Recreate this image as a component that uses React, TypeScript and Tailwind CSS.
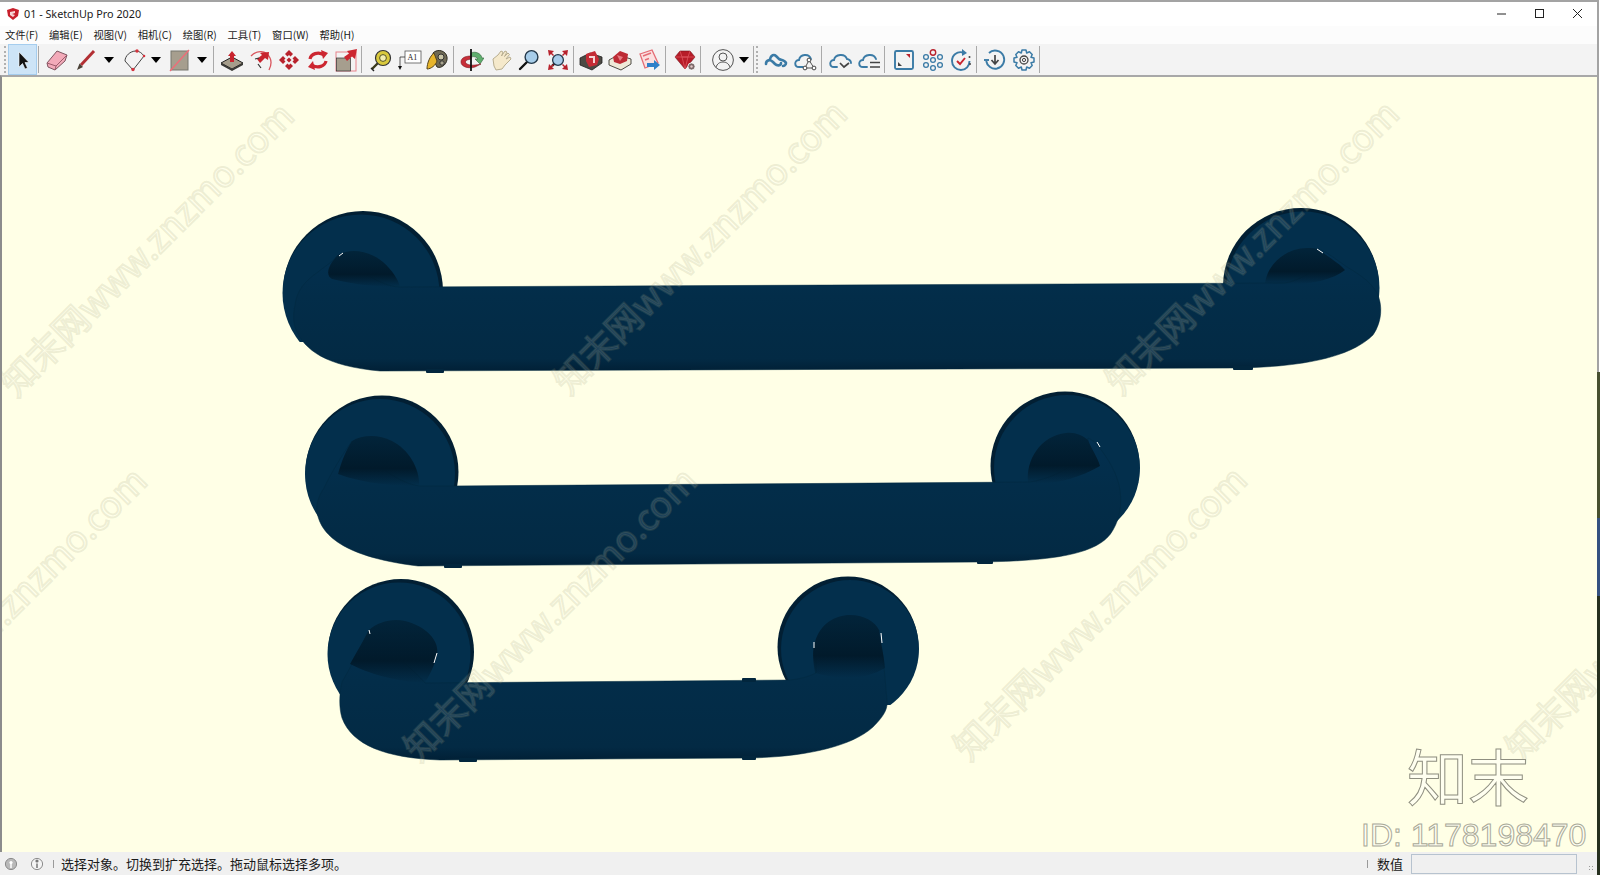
import type { ReactNode } from 'react'

const cjk = '[font-family:"Noto_Sans_CJK_SC","Noto_Sans",sans-serif]'

function Ico({ children }: { children: ReactNode }) {
  return (
    <svg width="24" height="24" viewBox="0 0 24 24" fill="none" aria-hidden="true">
      {children}
    </svg>
  )
}

function Tool({ className = 'w-[28.5px]', children }: { className?: string; children: ReactNode }) {
  return <div className={`h-full flex items-center justify-center shrink-0 ${className}`}>{children}</div>
}

function Drop({ className }: { className: string }) {
  return (
    <div className={`h-full flex items-center justify-center shrink-0 ${className}`}>
      <div className="w-0 h-0 border-x-[5px] border-x-transparent border-t-[6px] border-t-black" />
    </div>
  )
}

function Sep({ className }: { className: string }) {
  return <div className={`w-px h-[27px] bg-[#a9a9a9] shrink-0 ${className}`} />
}

function Grip({ className = '' }: { className?: string }) {
  return <div className={`h-[27px] w-[2px] shrink-0 border-l-2 border-dotted border-[#b0b0b0] ${className}`} />
}

const blue = '#3b7ba6'

const icons = {
  eraser: (
    <Ico>
      <path d="M2 15 L12 3 L22 7 L20 13 L10 22 L3 19 Z" fill="#f3aab9" stroke="#7d5560" strokeWidth="1" />
      <path d="M2 15 L11 18 L10 22 M11 18 L22 7" stroke="#9c5a6a" strokeWidth="1" />
    </Ico>
  ),
  pencil: (
    <Ico>
      <path d="M20 3 L7 17" stroke="#b22f33" strokeWidth="3" />
      <path d="M5.5 15.5 L9 19 L3 22 Z" fill="#4a4036" />
    </Ico>
  ),
  arc: (
    <Ico>
      <path d="M3 13 C3 8 8 3 14 3 C17 3 20 5 22 8 L11 22 Z" stroke="#444" strokeWidth="1" />
      <circle cx="11" cy="21.5" r="1.7" fill="#d4333d" />
      <circle cx="15" cy="3" r="1.7" fill="#d4333d" />
      <circle cx="22" cy="8" r="1.3" fill="#d4333d" />
    </Ico>
  ),
  rect: (
    <Ico>
      <rect x="3" y="3" width="17" height="19" fill="#a69e8e" stroke="#77776e" />
      <path d="M2 23 L21 2" stroke="#ee6d78" strokeWidth="1.4" />
    </Ico>
  ),
  push: (
    <Ico>
      <path d="M1 15 L12 9 L23 15 L12 21 Z" fill="#a59d8b" stroke="#222" />
      <path d="M1 15 L12 21 L23 15 L23 17 L12 23 L1 17 Z" fill="#3a3a36" />
      <path d="M12 3 L16 8 L14 8 L14 14 L10 14 L10 8 L8 8 Z" fill="#c8242e" />
    </Ico>
  ),
  follow: (
    <Ico>
      <path d="M2 8 C8 2 17 2 21 10 C23 14 22 18 20 22" stroke="#d9555d" strokeWidth="1.3" />
      <path d="M20 4 L19 12 L16 10 L11 15 L8 11 L13 7 L11 5 Z" fill="#c8242e" />
      <path d="M6 11 L10 10 M9 16 L12 20" stroke="#333" strokeWidth="1.2" />
    </Ico>
  ),
  move: (
    <Ico>
      <path d="M12 2 L16 6 L13.5 8.5 L12 7 L10.5 8.5 L8 6 Z M22 12 L18 16 L15.5 13.5 L17 12 L15.5 10.5 L18 8 Z M12 22 L8 18 L10.5 15.5 L12 17 L13.5 15.5 L16 18 Z M2 12 L6 8 L8.5 10.5 L7 12 L8.5 13.5 L6 16 Z" fill="#b8222c" />
      <path d="M12 9.5 L14.5 12 L12 14.5 L9.5 12 Z" fill="#b8222c" />
    </Ico>
  ),
  rotate: (
    <Ico>
      <path d="M4 11 C5 6 12 3 18 7" stroke="#cc2630" strokeWidth="3.2" />
      <path d="M15 2 L22 5 L17 11 Z" fill="#cc2630" />
      <path d="M20 13 C19 18 12 21 6 17" stroke="#cc2630" strokeWidth="3.2" />
      <path d="M9 22 L2 19 L7 13 Z" fill="#cc2630" />
    </Ico>
  ),
  scale: (
    <Ico>
      <rect x="2" y="4" width="20" height="19" fill="none" stroke="#e8838b" />
      <rect x="2.5" y="10" width="14" height="13" fill="#a69e8e" stroke="#333" strokeWidth="0.7" />
      <path d="M23 1 L21 11 L18 8.5 L13 13 L10 9 L15 5.5 L13 3 Z" fill="#cc2630" />
    </Ico>
  ),
  tape: (
    <Ico>
      <path d="M3 21 L9 15" stroke="#3a3a1c" strokeWidth="2.4" />
      <circle cx="14" cy="10" r="7.5" fill="#d9c93d" stroke="#333" strokeWidth="1.2" />
      <circle cx="14" cy="10" r="3.4" fill="#f2eeb0" stroke="#55511c" />
      <path d="M2 20 L5 23" stroke="#222" strokeWidth="1.4" />
    </Ico>
  ),
  text: (
    <Ico>
      <rect x="7" y="3" width="16" height="12" fill="#fff" stroke="#555" strokeWidth="0.8" />
      <text x="9.5" y="12" fontSize="8" fill="#222" fontFamily="Liberation Serif, serif">A1</text>
      <path d="M7 9 H2 V19" stroke="#333" strokeWidth="0.8" />
      <path d="M0 18 H4 L2 22 Z" fill="#111" />
    </Ico>
  ),
  paint: (
    <Ico>
      <path d="M8 5 C13 0 21 3 22 9 C23 15 17 21 12 19 L9 13 Z" fill="#6f6a55" stroke="#2e2c22" />
      <circle cx="16" cy="9" r="3" fill="#c9c5a6" stroke="#333" />
      <circle cx="17" cy="15" r="2.2" fill="#a9a58e" stroke="#333" />
      <path d="M9 5 C5 8 2 15 2 21 C6 21 11 17 12 13 Z" fill="#e7b52c" stroke="#54431a" />
    </Ico>
  ),
  orbit: (
    <Ico>
      <path d="M11 5 C15 3 21 5 22 10 L24 10 L20 16 L15 11 L18 11 C17 9 14 8 11 9 Z" fill="#5fae6e" stroke="#33643a" strokeWidth="0.6" />
      <path d="M11 8 C5 8 1 10 1 14 C1 19 9 21 15 19 L21 16 C17 17 11 18 7 16 C5 15 5 13 7 12 L11 11 Z" fill="#c72e38" stroke="#7b1b22" strokeWidth="0.6" />
      <path d="M11 1 V23" stroke="#111" strokeWidth="1.8" />
    </Ico>
  ),
  pan: (
    <Ico>
      <path d="M4 11 L9 7 L12 3 L14 4 L12.5 8 L16 3 L18 4 L15.5 8.5 L19 5 L20.5 6.5 L17 11 L21 9 L22 11 L16 17 L13 21 L7 22 L5 18 Z" fill="#f5e9cb" stroke="#b8ae90" strokeWidth="1" />
    </Ico>
  ),
  zoom: (
    <Ico>
      <path d="M10 14 L3 21" stroke="#111" strokeWidth="2.4" strokeLinecap="round" />
      <circle cx="14.5" cy="9" r="6.4" fill="#a7cdea" stroke="#23384a" strokeWidth="1.4" />
    </Ico>
  ),
  extents: (
    <Ico>
      <path d="M10 14 L6 18" stroke="#111" strokeWidth="2.4" />
      <circle cx="12" cy="12" r="5.4" fill="#a7cdea" stroke="#23384a" strokeWidth="1.3" />
      <path d="M2 2 L8 3 L6 5 L8 7 L7 8 L5 6 L3 8 Z M22 2 L21 8 L19 6 L17 8 L16 7 L18 5 L16 3 Z M22 22 L16 21 L18 19 L16 17 L17 16 L19 18 L21 16 Z M2 22 L3 16 L5 18 L7 16 L8 17 L6 19 L8 21 Z" fill="#b8222c" />
    </Ico>
  ),
  warehouse: (
    <Ico>
      <path d="M1 10 L11 5 L23 9 L23 15 L13 22 L1 17 Z" fill="#4d4a44" stroke="#222" strokeWidth="0.8" />
      <path d="M7 6 L16 3 L20 11 L18 17 L10 19 L7 13 Z" fill="#c42c36" />
      <path d="M10 8 H16 V15 H14 V10 H10 Z" fill="#f5d5d5" />
    </Ico>
  ),
  extension: (
    <Ico>
      <path d="M1 12 L10 7 L23 11 L23 16 L13 22 L1 17 Z" fill="#efe9d8" stroke="#3d3a33" strokeWidth="0.9" />
      <path d="M5 9 L12 3 L20 6 L19 13 L12 16 L6 14 Z" fill="#bd2b35" />
      <path d="M9 7 L15 9 L12 13 Z" fill="#e77c83" />
    </Ico>
  ),
  layout: (
    <Ico>
      <path d="M3 6 L15 2 L21 15 L8 20 Z" fill="#fbe0e0" stroke="#e46c74" strokeWidth="1.3" />
      <path d="M6 8 L14 5 M8 12 L12 10.5" stroke="#e46c74" strokeWidth="1.4" />
      <path d="M10 15 H17 V12 L23 17 L17 22 V19 H10 Z" fill="#2f80c9" />
    </Ico>
  ),
  ruby: (
    <Ico>
      <path d="M2 9 L7 3 H17 L22 9 L12 21 Z" fill="#b71c28" stroke="#6e1018" strokeWidth="0.6" />
      <path d="M7 3 L9 9 H15 L17 3 M2 9 H22 M9 9 L12 21 L15 9" stroke="#e35a63" strokeWidth="0.7" />
      <circle cx="18.5" cy="18.5" r="3.6" fill="#7c6a6a" stroke="#fff" strokeWidth="0.8" />
      <circle cx="18.5" cy="18.5" r="1.2" fill="#e5c9c9" />
    </Ico>
  ),
  profile: (
    <Ico>
      <circle cx="12" cy="12" r="10.4" stroke="#555" strokeWidth="1" />
      <circle cx="12" cy="9" r="4" stroke="#555" strokeWidth="1" />
      <path d="M5 19.5 C6 15.5 9 14 12 14 C15 14 18 15.5 19 19.5" stroke="#555" strokeWidth="1" />
    </Ico>
  ),
  link: (
    <Ico>
      <path d="M2 16 C2 12 6 11 9 14 L11 16 C13 18 17 18 17 15" stroke={blue} strokeWidth="2.6" strokeLinecap="round" />
      <path d="M6 11 C7 7 10 6 12 8 L15 11 C17 12 21 12 22 15 C22 17 20 18 19 18" stroke={blue} strokeWidth="2.6" strokeLinecap="round" />
    </Ico>
  ),
  cloudNodes: (
    <Ico>
      <path d="M10 19 H6 C1 19 1 12 6 12 C7 6 16 5 18 11" stroke={blue} strokeWidth="1.9" strokeLinecap="round" />
      <path d="M16 12 L12 20 H21 Z" stroke="#444" strokeWidth="0.9" />
      <circle cx="16" cy="12" r="1.9" fill="#fff" stroke="#444" />
      <circle cx="12" cy="20" r="1.9" fill="#fff" stroke="#444" />
      <circle cx="21" cy="20" r="1.9" fill="#fff" stroke="#444" />
    </Ico>
  ),
  cloudCheck: (
    <Ico>
      <path d="M9 19 H6 C1 19 1 12 6 12 C7 6 17 5 19 11 C21 11 23 13 23 15" stroke={blue} strokeWidth="1.9" strokeLinecap="round" />
      <path d="M12 15 L16 19 L21 15" stroke="#444" strokeWidth="1.7" />
    </Ico>
  ),
  cloudList: (
    <Ico>
      <path d="M10 19 H6 C1 19 1 12 6 12 C7 6 17 5 19 11" stroke={blue} strokeWidth="1.9" strokeLinecap="round" />
      <path d="M13 14.5 H23 M13 19 H23" stroke="#444" strokeWidth="1.7" />
    </Ico>
  ),
  frame: (
    <Ico>
      <rect x="3" y="3" width="18" height="18" rx="1.5" stroke={blue} strokeWidth="1.9" />
      <path d="M14 6 H18 V10 Z" fill="#b8222c" />
      <path d="M6 14 V18 H10 Z" fill="#444" />
    </Ico>
  ),
  nodes: (
    <Ico>
      <circle cx="12" cy="4.5" r="2.7" stroke="#b8222c" strokeWidth="1.4" />
      <circle cx="5" cy="9" r="2.4" stroke={blue} strokeWidth="1.3" />
      <circle cx="19" cy="9" r="2.4" stroke={blue} strokeWidth="1.3" />
      <circle cx="5" cy="17" r="2.4" stroke={blue} strokeWidth="1.3" />
      <circle cx="19" cy="17" r="2.4" stroke={blue} strokeWidth="1.3" />
      <circle cx="12" cy="20" r="2.4" stroke={blue} strokeWidth="1.3" />
      <circle cx="12" cy="12" r="2.4" stroke={blue} strokeWidth="1.3" />
    </Ico>
  ),
  sync: (
    <Ico>
      <path d="M14 4.5 C8 3 3 7 3 13 C3 18 7 22 12 22 C17 22 20.5 18 20.5 13" stroke={blue} strokeWidth="1.9" />
      <path d="M13 1 L18 5 L13 8 Z" fill={blue} />
      <path d="M8 13 L11 16 L16 10" stroke="#c8242e" strokeWidth="1.9" />
      <circle cx="20.5" cy="9" r="1" fill="#444" />
      <circle cx="21" cy="16" r="1" fill="#444" />
    </Ico>
  ),
  download: (
    <Ico>
      <path d="M6 5 C10 1 18 2 20.5 8 C22.5 13 20 19 14 20.5 C9 21.5 4 18 3.2 13" stroke={blue} strokeWidth="1.9" />
      <path d="M1 12 L6 12" stroke={blue} strokeWidth="1.9" />
      <path d="M12 7 V15 M8.5 12 L12 16 L15.5 12" stroke="#444" strokeWidth="1.7" />
    </Ico>
  ),
  gear: (
    <Ico>
      <path d="M10 2 H14 L14.7 5 L17.5 3.8 L20.2 6.5 L19 9.3 L22 10 V14 L19 14.7 L20.2 17.5 L17.5 20.2 L14.7 19 L14 22 H10 L9.3 19 L6.5 20.2 L3.8 17.5 L5 14.7 L2 14 V10 L5 9.3 L3.8 6.5 L6.5 3.8 L9.3 5 Z" stroke={blue} strokeWidth="1.5" strokeLinejoin="round" />
      <circle cx="12" cy="12" r="4" stroke="#444" strokeWidth="1.3" />
      <circle cx="12" cy="12" r="1.6" stroke="#444" strokeWidth="1" />
    </Ico>
  ),
}

function Toolbar() {
  return (
    <div className="h-[31px] shrink-0 bg-[#f3f3f3] flex items-center relative">
      <Grip className="ml-[4px] mr-[2px]" />
      <Tool className="w-[29px] h-[27px] bg-[#cde4f7] border border-[#a5cdee]">
        <svg width="16" height="20" viewBox="0 0 16 20" aria-hidden="true">
          <path d="M4 2 V17 L7.5 13.5 L10 19 L12.5 18 L10 12.5 L14 12.5 Z" fill="#111" stroke="#fff" strokeWidth="0.6" />
        </svg>
      </Tool>
      <Sep className="ml-[1px] mr-[4px]" />
      <Tool>{icons.eraser}</Tool>
      <Tool>{icons.pencil}</Tool>
      <Drop className="w-[18px]" />
      <Tool className="w-[28.5px] ml-[2px]">{icons.arc}</Tool>
      <Drop className="w-[14px]" />
      <Tool className="w-[28.5px] ml-[3px]">{icons.rect}</Tool>
      <Drop className="w-[16px]" />
      <Sep className="ml-[3px] mr-[4px]" />
      <Tool>{icons.push}</Tool>
      <Tool>{icons.follow}</Tool>
      <Tool>{icons.move}</Tool>
      <Tool>{icons.rotate}</Tool>
      <Tool>{icons.scale}</Tool>
      <Sep className="ml-[0.5px] mr-[5px]" />
      <Tool>{icons.tape}</Tool>
      <Tool>{icons.text}</Tool>
      <Tool className="w-[25px]">{icons.paint}</Tool>
      <Sep className="ml-[4px] mr-[4px]" />
      <Tool>{icons.orbit}</Tool>
      <Tool>{icons.pan}</Tool>
      <Tool>{icons.zoom}</Tool>
      <Tool>{icons.extents}</Tool>
      <Sep className="ml-[1px] mr-[3px]" />
      <Tool>{icons.warehouse}</Tool>
      <Tool>{icons.extension}</Tool>
      <Tool className="w-[28.5px] ml-[1px]">{icons.layout}</Tool>
      <Sep className="ml-[1.5px] mr-[5px]" />
      <Tool>{icons.ruby}</Tool>
      <Sep className="mr-[8px]" />
      <Tool>{icons.profile}</Tool>
      <Drop className="w-[14px]" />
      <Sep className="ml-[2px] mr-[2px]" />
      <Grip className="mr-[4px]" />
      <Tool>{icons.link}</Tool>
      <Tool>{icons.cloudNodes}</Tool>
      <Sep className="ml-[2px] mr-[4px]" />
      <Tool>{icons.cloudCheck}</Tool>
      <Tool>{icons.cloudList}</Tool>
      <Sep className="ml-[1px] mr-[5px]" />
      <Tool>{icons.frame}</Tool>
      <Tool>{icons.nodes}</Tool>
      <Tool>{icons.sync}</Tool>
      <Sep className="ml-[0.5px] mr-[4px]" />
      <Tool>{icons.download}</Tool>
      <Tool>{icons.gear}</Tool>
      <Sep className="ml-[1px]" />
    </div>
  )
}

// outlines traced from the screenshot, page coordinates
const handles = [
  {
    id: 'a',
    clipY: 342,
    discs: [
      { cx: 363, cy: 291, r: 80, shift: -2 },
      { cx: 1301, cy: 286, r: 78, shift: 2 },
    ],
    holes: [
      'M338 255 C350 248 368 250 383 262 C392 270 398 279 400 287 C380 287 355 285 332 279 C325 275 328 265 338 255Z',
      'M1265 283 C1268 262 1288 248 1307 248 C1312 248 1316 248 1319 250 C1330 258 1340 264 1345 270 C1330 282 1300 287 1265 283Z',
    ],
    tube: 'M338 255 C333 262 325 266 318 272 C305 281 297 290 295 305 C293 315 293 322 296 330 C305 350 325 366 380 371 L1237 368 C1300 367 1350 358 1373 335 C1382 322 1383 305 1377 293 C1370 280 1355 272 1347 267 C1337 260 1327 252 1317 248 C1325 262 1310 278 1285 283 L400 287 C385 287 365 275 338 255Z',
    bumps: [
      { x: 426, y: 369, w: 18 },
      { x: 1233, y: 366, w: 20 },
    ],
  },
  {
    id: 'b',
    clipY: 522,
    discs: [
      { cx: 382, cy: 472, r: 76.5, shift: -2 },
      { cx: 1065, cy: 466, r: 74.5, shift: 2 },
    ],
    holes: [
      'M352 441 C362 435 378 434 392 441 C408 449 420 468 419 486 C395 486 365 484 338 474 C342 460 346 450 352 441Z',
      'M1028 482 C1026 460 1040 436 1066 433 C1075 432 1082 435 1088 440 C1092 450 1098 458 1100 466 C1075 480 1050 486 1028 482Z',
    ],
    tube: 'M352 441 C342 455 330 475 324 488 C318 497 316 505 317 512 C320 530 335 556 418 566 L980 562 C1050 561 1100 555 1113 530 C1120 518 1122 505 1120 490 C1118 475 1108 458 1098 446 C1095 442 1092 440 1088 438 C1090 455 1065 476 1030 482 L450 486 L420 486 C400 484 375 465 352 441Z',
    bumps: [
      { x: 444, y: 564, w: 18 },
      { x: 977, y: 560, w: 16 },
    ],
  },
  {
    id: 'c',
    clipY: 705,
    discs: [
      { cx: 401, cy: 652, r: 73, shift: -2 },
      { cx: 848, cy: 647, r: 70.5, shift: 2 },
    ],
    holes: [
      'M369 630 C378 622 392 618 405 621 C425 626 440 640 437 655 C434 668 428 677 425 683 C405 682 375 677 350 664 C358 650 363 641 369 630Z',
      'M815 673 C813 660 812 650 815 642 C820 624 835 615 850 615 C865 615 875 622 879 630 C881 645 884 655 885 668 C865 680 840 680 815 673Z',
    ],
    tube: 'M369 630 C360 650 350 668 342 682 C339 695 339 708 342 718 C352 745 385 758 440 760 L750 758 C800 757 850 748 873 727 C885 715 888 708 887 700 C885 680 884 660 879 630 C876 645 840 650 816 652 L816 673 C808 677 800 679 790 680 L425 683 C420 676 395 655 369 630Z',
    bumps: [
      { x: 459, y: 758, w: 18 },
      { x: 742, y: 678, w: 14 },
      { x: 742, y: 756, w: 14 },
    ],
  },
]

function Drawing() {
  return (
    <svg viewBox="0 0 1600 875" className="absolute left-[-2px] top-[-77px] w-[1600px] h-[875px]" aria-hidden="true">
      <defs>
        <linearGradient id="tube" x1="0" y1="0" x2="0" y2="1">
          <stop offset="0" stopColor="#033050" />
          <stop offset="0.4" stopColor="#032d49" />
          <stop offset="0.9" stopColor="#032a44" />
          <stop offset="1" stopColor="#012036" />
        </linearGradient>
        <linearGradient id="hole" x1="0" y1="0" x2="0" y2="1">
          <stop offset="0" stopColor="#02243a" />
          <stop offset="0.65" stopColor="#011a2b" />
          <stop offset="1" stopColor="#011a2b" stopOpacity="0" />
        </linearGradient>
      </defs>
      {handles.map(h => (
        <g key={h.id}>
          <clipPath id={`disc-${h.id}`}>
            <rect x="0" y="0" width="1600" height={h.clipY} />
          </clipPath>
          <g clipPath={`url(#disc-${h.id})`}>
            {h.discs.map(d => (
              <g key={d.cx}>
                <circle cx={d.cx} cy={d.cy} r={d.r} fill="#021f33" />
                <circle cx={d.cx + d.shift} cy={d.cy + 2} r={d.r - 1.5} fill="#032f4c" />
              </g>
            ))}
          </g>
          <path d={h.tube} fill="url(#tube)" stroke="#02283f" strokeWidth="0.5" />
          {h.holes.map(p => (
            <path key={p} d={p} fill="url(#hole)" />
          ))}
          {h.bumps.map(b => (
            <rect key={b.x + b.y} x={b.x} y={b.y} width={b.w} height="4" rx="1" fill="#02263d" />
          ))}
        </g>
      ))}
      <path d="M339 256 L343 253 M1317 249 L1323 253 M1097 442 L1100 447 M437 653 L434 663 M369 630 L370 634 M881 633 L882 643 M814 642 L814 648" stroke="#fff" strokeWidth="1" />
    </svg>
  )
}

const marks = [
  'left-[145px] top-[247px]',
  'left-[698px] top-[245px]',
  'left-[1250px] top-[245px]',
  'left-[-2px] top-[612px]',
  'left-[548px] top-[612px]',
  'left-[1098px] top-[611px]',
  'left-[1650px] top-[612px]',
]

function Watermarks() {
  return (
    <div className="absolute left-[-2px] top-[-77px] w-[1600px] h-[875px] pointer-events-none">
      {marks.map(m => (
        <div
          key={m}
          className={`absolute ${m} -translate-x-1/2 -translate-y-1/2 -rotate-45 whitespace-nowrap text-[36px] leading-none ${cjk} font-normal text-white/10 [-webkit-text-stroke:2px_rgba(150,150,110,0.17)]`}
        >
          知末网www.znzmo.com
        </div>
      ))}
      <div className={`absolute left-[1407px] top-[737px] text-[61px] leading-[76px] font-normal ${cjk} text-[#fffff0] [-webkit-text-stroke:1px_#8f8f80]`}>
        知末
      </div>
      <div className='absolute left-[1361px] top-[817px] text-[32px] leading-[36px] [font-family:"Liberation_Sans",sans-serif] text-[#fffff0] [-webkit-text-stroke:1px_#a9a998]'>
        ID: 1178198470
      </div>
    </div>
  )
}

function StatusDot({ kind }: { kind: 'fill' | 'info' }) {
  return (
    <svg width="14" height="14" viewBox="0 0 14 14" aria-hidden="true">
      <circle cx="7" cy="7" r="5.6" fill={kind === 'fill' ? '#b9b9b9' : '#f4f4f4'} stroke="#8c8c8c" />
      <circle cx="7" cy={kind === 'fill' ? 5.5 : 4} r="1.6" fill={kind === 'fill' ? '#fff' : '#777'} />
      <path d={kind === 'fill' ? 'M7 6 V11' : 'M7 6.5 V11'} stroke={kind === 'fill' ? '#fff' : '#777'} strokeWidth="1.5" />
    </svg>
  )
}

export default function App() {
  return (
    <div className={`w-[1600px] h-[875px] flex overflow-hidden bg-white text-[#1a1a1a] ${cjk}`}>
      <div className="flex-1 min-w-0 flex flex-col">
        {/* title bar */}
        <div className="h-[26px] shrink-0 border-t-2 border-[#a3a3a3] flex items-center">
          <svg width="14" height="14" viewBox="0 0 14 14" className="ml-[6px]" aria-hidden="true">
            <path d="M1 3 L7 1 L13 3 L12 9 L7 13 L2 9 Z" fill="#c8202c" />
            <path d="M4 5 L9 4 V6 L6 7 L9 8 L7 10 L4 8 Z" fill="#f7d7d7" />
          </svg>
          <span className='ml-[4px] text-[10.8px] leading-none [font-family:"Noto_Sans",sans-serif]'>01 - SketchUp Pro 2020</span>
          <div className="ml-auto flex items-center h-full">
            <svg width="12" height="12" viewBox="0 0 12 12" className="mr-[26px]" aria-hidden="true">
              <path d="M1 6 H10" stroke="#222" strokeWidth="1" />
            </svg>
            <svg width="12" height="12" viewBox="0 0 12 12" className="mr-[26px]" aria-hidden="true">
              <rect x="1.5" y="1.5" width="8" height="8" fill="none" stroke="#222" strokeWidth="1" />
            </svg>
            <svg width="12" height="12" viewBox="0 0 12 12" className="mr-[13px]" aria-hidden="true">
              <path d="M1 1 L10 10 M10 1 L1 10" stroke="#222" strokeWidth="1" />
            </svg>
          </div>
        </div>
        {/* menu */}
        <div className="h-[18px] shrink-0 flex items-center gap-[10.8px] pl-[5px] text-[10.3px] leading-none bg-[#fcfcfc]">
          {['文件(F)', '编辑(E)', '视图(V)', '相机(C)', '绘图(R)', '工具(T)', '窗口(W)', '帮助(H)'].map(t => (
            <span key={t}>{t}</span>
          ))}
        </div>
        <Toolbar />
        {/* model view */}
        <div className="flex-1 min-h-0 relative overflow-hidden bg-[#ffffe6] border-t-2 border-l-2 border-t-[#a8a8a8] border-l-[#8c8c8c]">
          <Drawing />
          <Watermarks />
        </div>
        {/* status bar */}
        <div className="h-[23px] shrink-0 bg-[#f0f0f0] flex items-center text-[13px] leading-none">
          <div className="ml-[4px] flex items-center gap-[12px]">
            <StatusDot kind="fill" />
            <StatusDot kind="info" />
          </div>
          <div className="ml-[9px] w-px h-[8px] bg-[#9a9a9a]" />
          <span className="ml-[7px]">选择对象。切换到扩充选择。拖动鼠标选择多项。</span>
          <div className="ml-auto w-px h-[8px] bg-[#9a9a9a]" />
          <span className="ml-[9px]">数值</span>
          <div className="ml-[8px] w-[166px] h-[20px] border border-[#b7c3cf] bg-[#f0f0f0]" />
          <div className="ml-[11px] mr-[2px] mt-[10px] w-[7px] h-[7px] bg-[radial-gradient(#9a9a9a_1px,transparent_1px)] bg-[length:3px_3px]" />
        </div>
      </div>
      {/* desktop peeking out at the right edge */}
      <div className="w-[3px] shrink-0 flex flex-col">
        <div className="h-[372px] bg-white border-l-2 border-[#a3a3a3]" />
        <div className="h-[146px] bg-[#47502f]" />
        <div className="h-[78px] bg-[#34517f]" />
        <div className="flex-1 bg-[#26301f]" />
      </div>
    </div>
  )
}
